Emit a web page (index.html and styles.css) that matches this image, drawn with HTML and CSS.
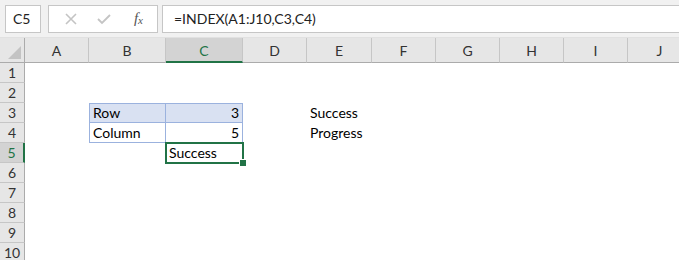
FILE: index.html
```html
<!DOCTYPE html>
<html lang="en">
<head>
    <meta charset="UTF-8">
    <title>INDEX</title>
    <link rel="stylesheet" href="styles.css">
</head>
<body>
    <div class="formula-bar">
        <div class="name-box">C5</div>
        <div class="tools">
            <svg class="tool" width="14" height="14" viewBox="0 0 14 14"><path d="M2 2 L12 12 M12 2 L2 12" stroke="#c4c4c4" stroke-width="1.6" fill="none"/></svg>
            <svg class="tool" width="16" height="14" viewBox="0 0 16 14"><path d="M2 7 L6 11 L14 3" stroke="#c4c4c4" stroke-width="1.8" fill="none"/></svg>
            <span class="fx">f<sub>x</sub></span>
        </div>
        <div class="formula">=INDEX(A1:J10,C3,C4)</div>
    </div>

    <div class="sheet">
        <div class="corner"><span class="tri"></span></div>
        <div class="col-head">A</div>
        <div class="col-head">B</div>
        <div class="col-head active">C</div>
        <div class="col-head">D</div>
        <div class="col-head">E</div>
        <div class="col-head">F</div>
        <div class="col-head">G</div>
        <div class="col-head">H</div>
        <div class="col-head">I</div>
        <div class="col-head">J</div>

        <!-- row 1 -->
        <div class="row-head">1</div>
        <div class="cell"></div><div class="cell"></div><div class="cell"></div><div class="cell"></div><div class="cell"></div>
        <div class="cell"></div><div class="cell"></div><div class="cell"></div><div class="cell"></div><div class="cell"></div>

        <!-- row 2 -->
        <div class="row-head">2</div>
        <div class="cell"></div><div class="cell"></div><div class="cell"></div><div class="cell"></div><div class="cell"></div>
        <div class="cell"></div><div class="cell"></div><div class="cell"></div><div class="cell"></div><div class="cell"></div>

        <!-- row 3 -->
        <div class="row-head">3</div>
        <div class="cell"></div>
        <div class="cell tbl tbl-top tbl-left shade">Row</div>
        <div class="cell tbl tbl-top shade num">3</div>
        <div class="cell"></div>
        <div class="cell">Success</div>
        <div class="cell"></div><div class="cell"></div><div class="cell"></div><div class="cell"></div><div class="cell"></div>

        <!-- row 4 -->
        <div class="row-head">4</div>
        <div class="cell"></div>
        <div class="cell tbl tbl-left">Column</div>
        <div class="cell tbl num">5</div>
        <div class="cell"></div>
        <div class="cell">Progress</div>
        <div class="cell"></div><div class="cell"></div><div class="cell"></div><div class="cell"></div><div class="cell"></div>

        <!-- row 5 -->
        <div class="row-head active">5</div>
        <div class="cell"></div>
        <div class="cell"></div>
        <div class="cell selected">Success<span class="handle"></span></div>
        <div class="cell"></div><div class="cell"></div>
        <div class="cell"></div><div class="cell"></div><div class="cell"></div><div class="cell"></div><div class="cell"></div>

        <div class="row-head">6</div><div class="blank"></div>
        <div class="row-head">7</div><div class="blank"></div>
        <div class="row-head">8</div><div class="blank"></div>
        <div class="row-head">9</div><div class="blank"></div>
        <div class="row-head">10</div><div class="blank"></div>
    </div>
</body>
</html>
```

FILE: styles.css
```css
body {
    margin: 0;
    width: 679px;
    height: 260px;
    overflow: hidden;
    background: #ffffff;
    font-family: Lato, "Open Sans", sans-serif;
    font-size: 14px;
    color: #000;
}

.formula-bar {
    display: flex;
    align-items: center;
    gap: 6px;
    height: 38px;
    padding: 0 0 0 5px;
    background: #f1f1f1;
    box-sizing: border-box;
    border-bottom: 1px solid #e1e1e1;
}

.name-box {
    width: 36px;
    height: 28px;
    box-sizing: border-box;
    background: #fff;
    border: 1px solid #c6c6c6;
    padding-left: 7px;
    line-height: 26px;
    color: #222;
}

.tools {
    width: 110px;
    height: 28px;
    box-sizing: border-box;
    background: #fff;
    border: 1px solid #c6c6c6;
    display: flex;
    align-items: center;
    padding: 0 14px 0 15px;
    gap: 18px;
    margin-left: 1px;
}

.fx {
    margin-left: auto;
    font-family: "Liberation Serif", serif;
    font-style: italic;
    font-size: 15px;
    color: #555;
}

.fx sub {
    font-size: 11px;
    vertical-align: -1px;
}

.formula {
    flex: 1;
    height: 28px;
    box-sizing: border-box;
    background: #fff;
    border: 1px solid #c6c6c6;
    border-right: none;
    padding-left: 11px;
    line-height: 26px;
    color: #222;
    margin-left: -2px;
}

.sheet {
    display: grid;
    grid-template-columns: 25px 64px 77px 77px 64px 65px 64px 64px 64px 64px 64px;
    grid-template-rows: 25px repeat(10, 20px);
    margin-top: 0;
}

.corner {
    background: #e6e6e6;
    border-right: 1px solid #ababab;
    border-bottom: 1px solid #ababab;
    position: relative;
}

.tri {
    position: absolute;
    right: 3px;
    bottom: 3px;
    width: 0;
    height: 0;
    border-left: 13px solid transparent;
    border-bottom: 13px solid #c3c3c3;
}

.col-head {
    background: #e6e6e6;
    border-right: 1px solid #c6c6c6;
    border-bottom: 1px solid #ababab;
    text-align: center;
    line-height: 25px;
    color: #333;
    box-sizing: border-box;
}

.col-head.active {
    background: #d3d3d3;
    border-bottom: 2px solid #217346;
    color: #217346;
}

.row-head {
    background: #e6e6e6;
    border-right: 1px solid #ababab;
    border-bottom: 1px solid #c6c6c6;
    text-align: center;
    line-height: 20px;
    color: #333;
    box-sizing: border-box;
}

.row-head.active {
    background: #d3d3d3;
    border-right: 2px solid #217346;
    color: #217346;
}

.cell {
    line-height: 20px;
    padding: 0 3px;
    white-space: nowrap;
    box-sizing: border-box;
}

.blank {
    grid-column: 2 / -1;
}

.tbl {
    border-right: 1px solid #9bb2de;
    border-bottom: 1px solid #9bb2de;
    line-height: 19px;
}

.tbl-top {
    border-top: 1px solid #9bb2de;
    line-height: 18px;
}

.tbl-left {
    border-left: 1px solid #9bb2de;
}

.shade {
    background: #d9e1f2;
}

.num {
    text-align: right;
}

.selected {
    position: relative;
    border: 2px solid #217346;
    margin: -1px 0 0 -1px;
    line-height: 18px;
    padding-left: 2px;
    width: 79px;
    height: 22px;
}

.handle {
    position: absolute;
    right: -5px;
    bottom: -5px;
    width: 6px;
    height: 6px;
    background: #217346;
    border: 1px solid #fff;
}
```
